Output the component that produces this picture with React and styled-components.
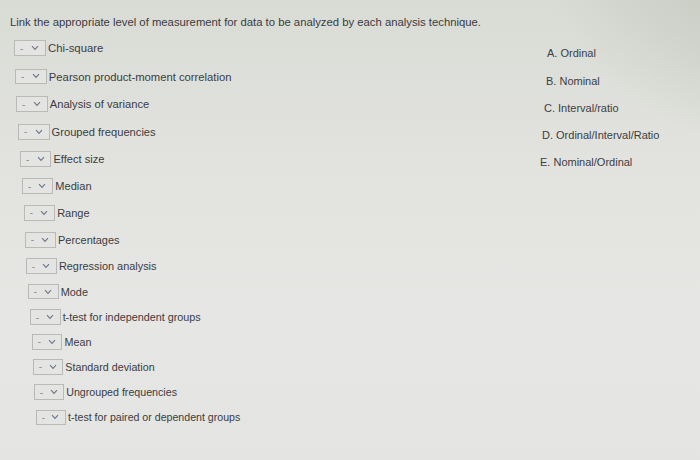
import React from "react";
import styled, { createGlobalStyle } from "styled-components";

const Global = createGlobalStyle`
  html, body { margin: 0; padding: 0; }
  body {
    width: 700px;
    height: 460px;
    overflow: hidden;
    font-family: "Liberation Sans", Arial, sans-serif;
    background:
      radial-gradient(ellipse 420px 300px at 120% -10%, rgba(160,170,150,0.55), rgba(160,170,150,0) 70%),
      linear-gradient(180deg, #d9dbd5 0%, #e2e3df 35%, #e6e6e4 70%, #e4e4e2 100%);
  }
`;

const Page = styled.div`
  display: grid;
  grid-template-columns: 520px 1fr;
  padding: 16px 0 0 10px;
  color: #3c3d3f;
`;

const Heading = styled.div`
  grid-column: 1 / span 2;
  font-size: 11.3px;
  line-height: 13px;
  color: #3a3b3e;
`;

const LeftCol = styled.div`
  display: flex;
  flex-direction: column;
  padding-top: 5px;
`;

const Row = styled.div`
  display: flex;
  align-items: center;
  height: ${(p) => p.$h}px;
  margin-left: ${(p) => p.$indent}px;
`;

const SelectBox = styled.div`
  display: flex;
  align-items: center;
  justify-content: space-between;
  box-sizing: border-box;
  width: ${(p) => 32 * p.$scale}px;
  height: ${(p) => 16 * p.$scale}px;
  padding: 0 ${(p) => 6 * p.$scale}px 0 ${(p) => 5 * p.$scale}px;
  border: 1px solid #b9bab8;
  background: #e4e5e2;
  color: #8b8d8f;
  font-size: 10px;
`;

const Label = styled.span`
  margin-left: 2px;
  font-size: ${(p) => 11.3 * p.$scale}px;
  color: #3b3c3f;
  white-space: nowrap;
`;

const RightCol = styled.div`
  display: flex;
  flex-direction: column;
  padding-top: 10px;
`;

const Option = styled.div`
  height: ${(p) => p.$h}px;
  display: flex;
  align-items: center;
  margin-left: ${(p) => p.$indent}px;
  font-size: 11px;
  color: #3d3e41;
  white-space: nowrap;
`;

const Chevron = () => (
  <svg width="8" height="6" viewBox="0 0 8 6">
    <polyline points="1,1.2 4,4.4 7,1.2" fill="none" stroke="#6f7a8a" strokeWidth="1.2" />
  </svg>
);

const rows = [
  ["Chi-square", 48, 4],
  ["Pearson product-moment correlation", 77, 5],
  ["Analysis of variance", 104, 6],
  ["Grouped frequencies", 132, 8],
  ["Effect size", 159, 10],
  ["Median", 186, 12],
  ["Range", 213, 14],
  ["Percentages", 240, 15],
  ["Regression analysis", 266, 16],
  ["Mode", 292, 18],
  ["t-test for independent groups", 317, 20],
  ["Mean", 342, 22],
  ["Standard deviation", 367, 23],
  ["Ungrouped frequencies", 392, 24],
  ["t-test for paired or dependent groups", 417, 26],
];

const options = [
  ["A. Ordinal", 53, 17],
  ["B. Nominal", 81, 16],
  ["C. Interval/ratio", 108, 14],
  ["D. Ordinal/Interval/Ratio", 135, 12],
  ["E. Nominal/Ordinal", 162, 10],
];

export default function App() {
  const firstTop = 34;
  return (
    <>
      <Global />
      <Page>
        <Heading>Link the appropriate level of measurement for data to be analyzed by each analysis technique.</Heading>
        <LeftCol>
          {rows.map(([label, y, indent], i) => {
            const prev = i === 0 ? firstTop : (rows[i - 1][1] + y) / 2;
            const next = i === rows.length - 1 ? y + 13 : (rows[i + 1][1] + y) / 2;
            const scale = 1 - (0.06 * i) / (rows.length - 1);
            return (
              <Row key={label} $h={next - prev} $indent={indent}>
                <SelectBox $scale={scale}>
                  <span>-</span>
                  <Chevron />
                </SelectBox>
                <Label $scale={scale}>{label}</Label>
              </Row>
            );
          })}
        </LeftCol>
        <RightCol>
          {options.map(([label, y, indent], i) => {
            const prev = i === 0 ? 39 : (options[i - 1][1] + y) / 2;
            const next = i === options.length - 1 ? y + 13 : (options[i + 1][1] + y) / 2;
            return (
              <Option key={label} $h={next - prev} $indent={indent}>
                {label}
              </Option>
            );
          })}
        </RightCol>
      </Page>
    </>
  );
}
